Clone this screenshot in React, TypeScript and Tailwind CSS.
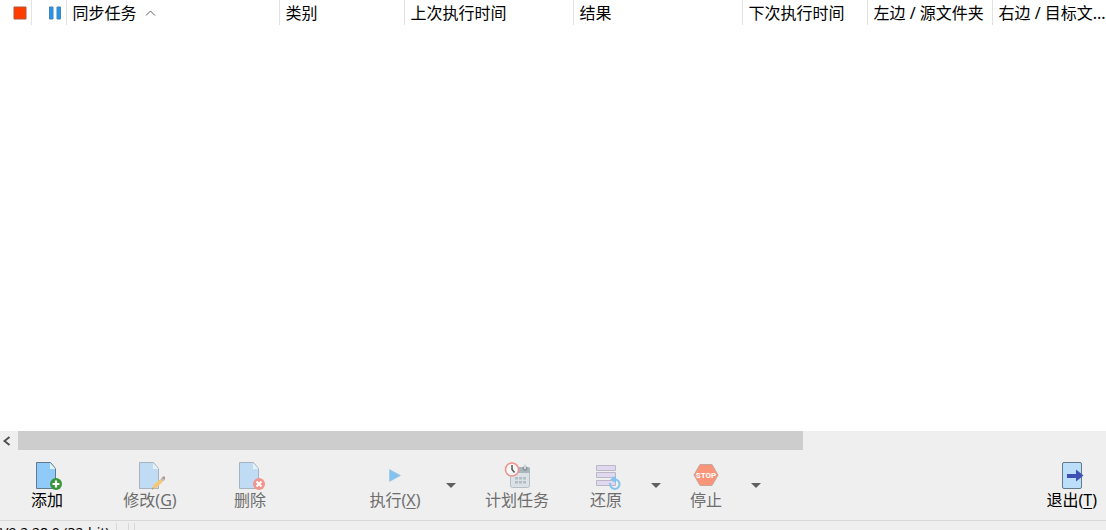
import React from 'react';

interface Column {
  label: string;
  width: string;
  sorted?: boolean;
}

const columns: Column[] = [
  { label: '同步任务', width: 'w-[213px]', sorted: true },
  { label: '类别', width: 'w-[125px]' },
  { label: '上次执行时间', width: 'w-[169px]' },
  { label: '结果', width: 'w-[169px]' },
  { label: '下次执行时间', width: 'w-[125px]' },
  { label: '左边 / 源文件夹', width: 'w-[125px]' }
];

const PageShape: React.FC = () => (
  <>
    <path d="M1.5 1.5h14l5 6v20h-19z" fill="#90caf9" stroke="#62798c" />
    <path d="M15 2v6h5.500z" fill="#e1f5fe" />
  </>
);

const AddIcon: React.FC = () => (
  <svg width="30" height="30" viewBox="-3 -1 30 30">
    <PageShape />
    <circle cx="21" cy="23" r="6" fill="#37963c" />
    <path d="M21 19.500v7M17.500 23h7" stroke="#fff" strokeWidth="2.200" />
  </svg>
);

const EditIcon: React.FC = () => (
  <svg width="30" height="30" viewBox="-3 -1 30 30">
    <g opacity="0.5">
      <PageShape />
    </g>
    <path d="M14 28.500l1.500-4.500 7-6 2.500 2.500-7 6.500z" fill="#f8c573" />
    <path d="M14 28.500l.7-2 1.300 1.300z" fill="#8c8c8c" />
    <path d="M22.500 18l1.500-1.500 2.500 2.500-1.500 1.500z" fill="#b4bcc0" />
    <path d="M24 16.500l1-1h1.500l.5.5v1.500l-.500 1.500z" fill="#b98c8c" />
  </svg>
);

const DeleteIcon: React.FC = () => (
  <svg width="30" height="30" viewBox="-3 -1 30 30">
    <g opacity="0.5">
      <PageShape />
    </g>
    <circle cx="21" cy="23" r="6" fill="#f1948e" />
    <path d="M18.500 20.500l5 5M23.500 20.500l-5 5" stroke="#fff" strokeWidth="2" />
  </svg>
);

const RunIcon: React.FC = () => (
  <svg width="30" height="30" viewBox="-1 0 30 30">
    <path d="M8.500 9.500l11 6-11 6z" fill="#83c3f3" stroke="#9bb8ce" strokeWidth="0.500" />
  </svg>
);

const ScheduleIcon: React.FC = () => (
  <svg width="30" height="30" viewBox="-1 0 30 30">
    <path d="M7.500 8h19v17.500q0 2-2 2h-15q-2 0-2-2z" fill="#dbe2e5" stroke="#b5bfc3" />
    <path d="M7 13V9q0-2 2-2h16q2 0 2 2v4z" fill="#a9b6bc" />
    <circle cx="22" cy="8.500" r="2.500" fill="#8d9ba1" />
    <path d="M22 4.500v4.500" stroke="#d0d7da" strokeWidth="2" />
    <path
      d="M12 17h3v2.500h-3zM16 17h3v2.500h-3zM20 17h3v2.500h-3zM12 21h3v2.500h-3zM16 21h3v2.500h-3zM20 21h3v2.500h-3z"
      fill="#b2bec3"
    />
    <circle cx="9" cy="9.500" r="6.500" fill="#f7f7f7" stroke="#f0938c" strokeWidth="1.500" />
    <path d="M9 5v4.500l2.500 3" fill="none" stroke="#555" strokeWidth="1.500" />
  </svg>
);

const RestoreIcon: React.FC = () => (
  <svg width="30" height="30" viewBox="-1 0 30 30">
    <path
      d="M4.500 5.500h19v5h-19zM4.500 12.500h19v5h-19zM4.500 20.500h19v5h-19z"
      fill="#e0d8ee"
      stroke="#bbb6c5"
    />
    <path d="M23 19.500a4.700 4.700 0 1 1-4.700 3.500" fill="none" stroke="#83c3ee" strokeWidth="2" />
    <path d="M18 19.500l6-4v7.500z" fill="#83c3ee" />
  </svg>
);

const StopIcon: React.FC = () => (
  <svg width="30" height="30" viewBox="-1 0 30 30">
    <path d="M8 4.500h12l6 10.500-6 10.500H8L2 15z" fill="#fa9579" stroke="#c3a79f" />
    <text
      x="14"
      y="18"
      textAnchor="middle"
      fontSize="8"
      fontWeight="700"
      fill="#fff"
      className="font-['Liberation_Sans_Narrow','Roboto',sans-serif]"
    >
      STOP
    </text>
  </svg>
);

const ExitIcon: React.FC = () => (
  <svg width="30" height="30" viewBox="-1 -1 30 30">
    <rect x="4.500" y="1.500" width="19" height="26" rx="1.500" fill="#bbdefb" stroke="#62798c" />
    <path d="M9 13h9V8.500l7.500 6-7.500 6V17H9z" fill="#3f51b5" />
  </svg>
);

interface ToolButtonProps {
  icon: React.ReactNode;
  label: string;
  hotkey?: string;
  disabled?: boolean;
  className: string;
}

const ToolButton: React.FC<ToolButtonProps> = ({ icon, label, hotkey, disabled, className }) => (
  <button
    type="button"
    disabled={disabled}
    className={`flex shrink-0 flex-col items-center text-black disabled:text-[#6d6d6d] ${className}`}
  >
    {icon}
    <span className="whitespace-nowrap leading-5">
      {label}
      {hotkey && (
        <>
          (<span className="underline underline-offset-2">{hotkey}</span>)
        </>
      )}
    </span>
  </button>
);

const DropButton: React.FC<{ label: string; className: string }> = ({ label, className }) => (
  <button
    type="button"
    aria-label={label}
    className={`flex h-[50px] shrink-0 items-center justify-center ${className}`}
  >
    <svg width="10" height="5" viewBox="0 0 10 5">
      <path d="M0 0h10L5 5z" fill="#606060" />
    </svg>
  </button>
);

const App: React.FC = () => {
  return (
    <div className="flex h-screen flex-col overflow-hidden bg-[#efefef] font-['Noto_Sans','Noto_Sans_CJK_SC',sans-serif] text-base text-black">
      <main className="min-h-0 flex-1 overflow-hidden bg-white">
        <table className="w-full table-fixed border-collapse">
          <thead>
            <tr className="h-[25px]">
              <th className="w-[31px] border-r border-[#e2e2e2] p-0">
                <svg width="14" height="14" viewBox="0 0 14 14" className="ml-auto mr-1" role="img" aria-label="停止">
                  <path d="M1 1h12v12H1z" fill="#ff3d00" stroke="#b5563a" />
                </svg>
              </th>
              <th className="w-[35px] border-r border-[#e2e2e2] p-0">
                <svg width="12" height="14" viewBox="0 0 12 14" className="ml-auto mr-[5px]" role="img" aria-label="暂停">
                  <path d="M.5 1h3.500v12H.5zM8 1h3.500v12H8z" fill="#2196f3" stroke="#4782b0" />
                </svg>
              </th>
              {columns.map(col => (
                <th
                  key={col.label}
                  className={`border-r border-[#e2e2e2] p-0 pl-1.5 text-left font-normal leading-6 ${col.width}`}
                >
                  <span className="flex items-center gap-2 whitespace-nowrap">
                    {col.label}
                    {col.sorted && (
                      <svg width="11" height="6" viewBox="0 0 11 6">
                        <path d="M1 5.500l4.500-4.500 4.500 4.500" fill="none" stroke="#606060" />
                      </svg>
                    )}
                  </span>
                </th>
              ))}
              <th className="whitespace-nowrap p-0 pl-1.5 text-left font-normal leading-6">右边 / 目标文...</th>
            </tr>
          </thead>
        </table>
      </main>

      <div className="flex h-[19px] shrink-0">
        <button type="button" aria-label="向左滚动" className="flex w-[18px] items-center pl-[3px]">
          <svg width="8" height="10" viewBox="0 0 8 10">
            <path d="M6.500 1l-5 4 5 4" fill="none" stroke="#505050" strokeWidth="2" />
          </svg>
        </button>
        <div className="w-[71%] bg-[#cdcdcd]" />
      </div>

      <div className="flex h-[70px] shrink-0 items-start pt-2.5">
        <ToolButton icon={<AddIcon />} label="添加" className="w-[94px]" />
        <ToolButton icon={<EditIcon />} label="修改" hotkey="G" disabled className="w-28" />
        <ToolButton icon={<DeleteIcon />} label="删除" disabled className="w-[88px]" />
        <ToolButton icon={<RunIcon />} label="执行" hotkey="X" disabled className="ml-[54px] w-[94px]" />
        <DropButton label="执行选项" className="w-[18px]" />
        <ToolButton icon={<ScheduleIcon />} label="计划任务" disabled className="ml-1.5 w-[102px]" />
        <ToolButton icon={<RestoreIcon />} label="还原" disabled className="w-[76px]" />
        <DropButton label="还原选项" className="w-6" />
        <ToolButton icon={<StopIcon />} label="停止" disabled className="w-[76px]" />
        <DropButton label="停止选项" className="w-6" />
        <ToolButton icon={<ExitIcon />} label="退出" hotkey="T" className="ml-auto mr-[9px]" />
      </div>

      <footer className="flex h-2.5 shrink-0 items-start overflow-hidden border-t border-[#d7d7d7] text-sm leading-6">
        <span className="w-[116px] shrink-0 whitespace-nowrap">V9.2.28.0 (32-bit)</span>
        <span className="mt-0.5 h-5 w-3 border-l border-[#d7d7d7]" />
        <span className="mt-0.5 h-5 w-1.5 border-l border-[#d7d7d7]" />
        <span className="mt-0.5 h-5 border-l border-[#d7d7d7]" />
      </footer>
    </div>
  );
};

export default App;
